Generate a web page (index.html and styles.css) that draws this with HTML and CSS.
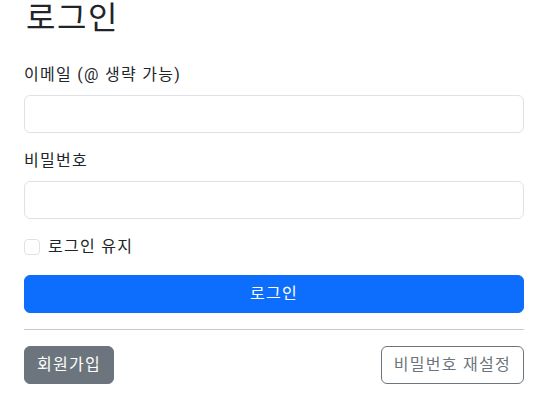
FILE: index.html
```html
<!DOCTYPE html>
<html lang="ko">
<head>
<meta charset="utf-8">
<title>로그인</title>
<link rel="stylesheet" href="styles.css">
</head>
<body>
<main class="container">
  <h1 class="title">로그인</h1>
  <form class="form">
    <div class="field">
      <label class="label" for="email">이메일 (@ 생략 가능)</label>
      <input class="input" id="email" type="text">
    </div>
    <div class="field">
      <label class="label" for="pw">비밀번호</label>
      <input class="input" id="pw" type="password">
    </div>
    <div class="check">
      <input class="check-box" id="keep" type="checkbox">
      <label class="check-label" for="keep">로그인 유지</label>
    </div>
    <button class="btn btn-primary btn-block" type="button">로그인</button>
  </form>
  <hr class="divider">
  <div class="actions">
    <a class="btn btn-secondary" href="#">회원가입</a>
    <a class="btn btn-outline" href="#">비밀번호 재설정</a>
  </div>
</main>
</body>
</html>
```
FILE: styles.css
```css
* { box-sizing: border-box; }
html, body { margin: 0; padding: 0; background: #fff; }
body {
  font-family: Roboto, "Noto Sans CJK KR", "Liberation Sans", sans-serif;
  font-size: 16px;
  line-height: 1.5;
  letter-spacing: 0.08em;
  color: #212529;
}
.container { padding: 0 14px 0 24px; width: 538px; }
.title {
  font-size: 32px;
  font-weight: 400;
  line-height: 36px;
  letter-spacing: 0.05em;
  margin: 0 0 27px 2px;
}
.form { display: flex; flex-direction: column; }
.field { margin-bottom: 16px; display: flex; flex-direction: column; }
.label { display: block; margin-bottom: 8px; line-height: 24px; }
.input {
  display: block;
  width: 100%;
  height: 38px;
  padding: 6px 12px;
  font: inherit;
  border: 1px solid #dee2e6;
  border-radius: 6px;
  background: #fff;
}
.check {
  display: flex;
  align-items: center;
  height: 24px;
  margin-bottom: 16px;
}
.check-box {
  appearance: none;
  -webkit-appearance: none;
  width: 16px;
  height: 16px;
  margin: 0 8px 0 0;
  border: 1px solid #dee2e6;
  border-radius: 4px;
  background: #fff;
}
.check-label { line-height: 24px; }
.btn {
  display: inline-flex;
  align-items: center;
  justify-content: center;
  height: 38px;
  padding: 0 12px;
  font: inherit;
  letter-spacing: 0.08em;
  border: 1px solid transparent;
  border-radius: 6px;
  text-decoration: none;
  cursor: pointer;
}
.btn-primary { background: #0d6efd; border-color: #0d6efd; color: #fff; }
.btn-block { width: 100%; }
.btn-secondary { background: #6c757d; border-color: #6c757d; color: #fff; }
.btn-outline { background: #fff; border-color: #6c757d; color: #6c757d; }
.divider {
  margin: 16px 0;
  border: 0;
  border-top: 1px solid #c8c9ca;
  height: 0;
}
.actions { display: flex; justify-content: space-between; }
```
